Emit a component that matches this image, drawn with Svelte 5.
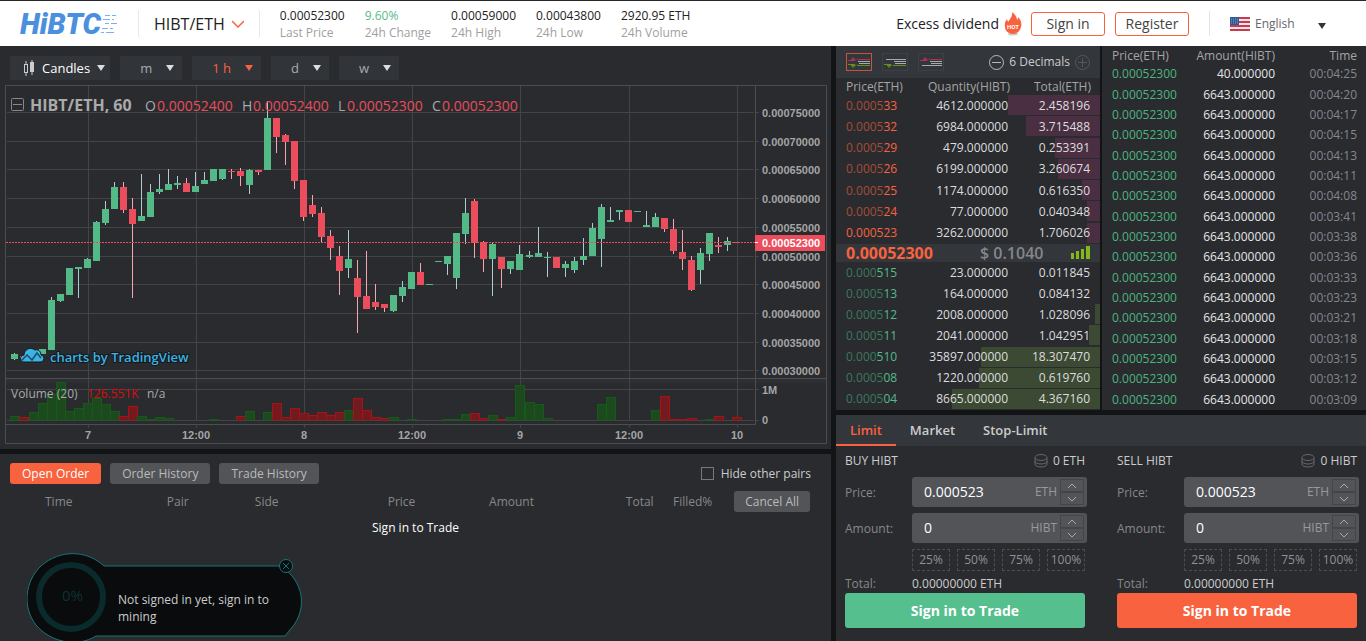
<script lang="ts">
	type Candle = {
		up: boolean;
		open: number;
		close: number;
		high: number;
		low: number;
		volume: number;
	};

	const stats = [
		{ value: '0.00052300', label: 'Last Price' },
		{ value: '9.60%', label: '24h Change', up: true },
		{ value: '0.00059000', label: '24h High' },
		{ value: '0.00043800', label: '24h Low' },
		{ value: '2920.95 ETH', label: '24h Volume' }
	];

	const intervals = ['m', '1 h', 'd', 'w'];

	// depth is the share of the row that the bar fills, in percent
	const asks = [
		{ dim: '0.0005', price: '33', quantity: '4612.000000', total: '2.458196', depth: 35 },
		{ dim: '0.0005', price: '32', quantity: '6984.000000', total: '3.715488', depth: 28 },
		{ dim: '0.0005', price: '29', quantity: '479.000000', total: '0.253391', depth: 17 },
		{ dim: '0.0005', price: '26', quantity: '6199.000000', total: '3.260674', depth: 16 },
		{ dim: '0.0005', price: '25', quantity: '1174.000000', total: '0.616350', depth: 7 },
		{ dim: '0.0005', price: '24', quantity: '77.000000', total: '0.040348', depth: 5 },
		{ dim: '', price: '0.000523', quantity: '3262.000000', total: '1.706026', depth: 5 }
	];

	const bids = [
		{ dim: '0.000', price: '515', quantity: '23.000000', total: '0.011845', depth: 0 },
		{ dim: '0.0005', price: '13', quantity: '164.000000', total: '0.084132', depth: 0 },
		{ dim: '0.0005', price: '12', quantity: '2008.000000', total: '1.028096', depth: 2 },
		{ dim: '0.0005', price: '11', quantity: '2041.000000', total: '1.042951', depth: 4 },
		{ dim: '0.000', price: '510', quantity: '35897.000000', total: '18.307470', depth: 45 },
		{ dim: '0.0005', price: '08', quantity: '1220.000000', total: '0.619760', depth: 46 },
		{ dim: '0.0005', price: '04', quantity: '8665.000000', total: '4.367160', depth: 56 }
	];

	const tradeTimes = [
		'00:04:25', '00:04:20', '00:04:17', '00:04:15', '00:04:13', '00:04:11',
		'00:04:08', '00:03:41', '00:03:38', '00:03:36', '00:03:33', '00:03:23',
		'00:03:21', '00:03:18', '00:03:15', '00:03:12', '00:03:09'
	];

	const sides = [
		{ id: 'buy', title: 'BUY HIBT', balance: '0 ETH' },
		{ id: 'sell', title: 'SELL HIBT', balance: '0 HIBT' }
	];

	const percents = ['25%', '50%', '75%', '100%'];

	const priceTicks = [
		['0.00075000', 112], ['0.00070000', 141], ['0.00065000', 169], ['0.00060000', 198],
		['0.00055000', 227], ['0.00050000', 256], ['0.00045000', 284], ['0.00040000', 313],
		['0.00035000', 342], ['0.00030000', 370]
	] as [string, number][];

	const timeTicks = [
		['7', 88], ['12:00', 196], ['8', 304], ['12:00', 412], ['9', 520], ['12:00', 629], ['10', 737]
	] as [string, number][];

	// direction, body top, body bottom, wick top, wick bottom, volume top
	const raw = `
		g 354 359 353 360 416|r 356 358 355 359 417|g 355 357 354 358 412|g 349 354 349 354 403
		g 300 350 297 350 394|g 294 301 294 302 382|g 268 295 268 295 411|g 267 269 267 298 408
		g 259 268 258 268 403|g 222 261 221 261 398|g 209 223 201 225 404|g 187 209 182 209 411
		r 187 210 182 213 416|r 209 224 198 298 406|g 216 221 174 221 416|g 192 217 184 217 419
		g 189 192 174 194 417|g 184 190 169 190 418|g 183 185 176 189 420|r 183 192 178 192 420
		g 186 192 172 192 421|g 180 184 172 184 421|g 169 181 169 181 419|g 169 179 169 180 420
		r 171 172 169 179 420|r 171 176 168 186 416|g 170 185 169 194 411|r 170 172 170 175 420
		g 118 170 101 170 412|r 118 137 118 153 403|r 135 142 134 165 417|r 141 181 141 189 408
		r 180 217 180 221 413|r 205 214 195 217 415|r 213 237 207 242 412|r 236 248 230 260 415
		r 256 271 246 295 412|g 259 268 230 278 410|r 278 297 260 333 398|r 296 309 251 309 410
		r 302 307 284 310 417|r 304 308 304 312 418|g 295 311 295 312 417|g 287 296 281 302 420
		g 272 289 272 289 419|r 272 285 263 285 420|g 284 285 284 285 421|g 261 262 261 262 421
		g 256 264 256 275 419|g 233 278 233 289 419|g 213 234 198 244 414|r 201 243 199 258 413
		r 242 259 241 272 418|g 244 259 243 296 415|r 257 269 257 288 419|g 261 269 261 274 417
		g 254 270 245 270 385|g 255 257 251 258 402|g 253 257 227 257 404|g 257 258 252 277 418
		r 257 268 257 268 421|g 264 268 261 277 420|g 261 270 257 273 420|g 256 260 238 265 420
		g 228 256 223 256 420|g 207 239 204 267 404|g 220 222 207 222 397|g 210 212 210 220 420
		r 210 222 210 222 421|g 211 212 211 212 421|g 225 227 211 227 421|g 217 227 213 227 410
		r 218 229 218 232 396|r 229 251 219 254 419|r 252 259 230 270 419|r 260 290 256 291 418
		g 253 270 248 284 420|g 233 254 233 261 419|r 245 247 237 253 416|g 241 245 237 251 420
		r 242 243 242 243 417`;

	const candles: Candle[] = raw
		.trim()
		.split(/\s*[|\n]\s*/)
		.map((row) => {
			const [dir, ...n] = row.split(' ');
			const [open, close, high, low, volume] = n.map(Number);
			return { up: dir === 'g', open, close, high, low, volume };
		});

	const candleX = (i: number) => Math.floor(11.98 + i * 9.018);

	let activeInterval = $state('1 h');
	let showMining = $state(true);
</script>

{#snippet caret()}
	<svg class="caret" viewBox="0 0 8 6" aria-hidden="true"><path d="M0 0h8L4 6z" /></svg>
{/snippet}

{#snippet bookRows(rows: typeof asks, kind: string)}
	<table class="book-table {kind}">
		<tbody>
			{#each rows as row}
				<tr style="--depth: {row.depth}%">
					<td class="price"><span class="dim">{row.dim}</span>{row.price}</td>
					<td class="quantity">{row.quantity}</td>
					<td class="total">{row.total}</td>
				</tr>
			{/each}
		</tbody>
	</table>
{/snippet}

{#snippet depthIcon(red: boolean, green: boolean)}
	<svg viewBox="0 0 24 16" aria-hidden="true">
		{#if red}
			<path d="M10 5.500h13" stroke="#b02f55" />
			<path d="M1 6.500h3l2-3 3 3" stroke="#b02f55" fill="none" />
			<path d="M4 5h4v2H4z" fill="#b02f55" />
		{:else}
			<path d="M3 5.500h20" stroke="#aaa" />
		{/if}
		<path d="M11 7.500h12M12 9.500h11" stroke="#aaa" />
		{#if green}
			<path d="M10 11.500h13" stroke="#64911d" />
			<path d="M1 10.500h3l2 3 3-3" stroke="#64911d" fill="none" />
			<path d="M4 10h4v2H4z" fill="#64911d" />
		{:else}
			<path d="M3 11.500h20" stroke="#aaa" />
		{/if}
	</svg>
{/snippet}

<div class="page">
	<header class="topbar">
		<a class="logo" href="#home">
			<span>HiBTC</span>
			<svg viewBox="0 0 17 20" aria-hidden="true">
				<path d="M4 1.500h5M11 1.500h4M2 5.500h7M11 5.500h2M4 9.500h4M10 9.500h6M1 14.500h6M9 14.500h3M0 18.500h3M5 18.500h8" />
			</svg>
		</a>
		<button class="pair" type="button">
			HIBT/ETH
			<svg viewBox="0 0 12 8" aria-hidden="true"><path d="M0 1l6 6 6-6" /></svg>
		</button>
		<dl class="stats">
			{#each stats as stat}
				<div>
					<dd class:up={stat.up}>{stat.value}</dd>
					<dt>{stat.label}</dt>
				</div>
			{/each}
		</dl>
		<nav class="account">
			<a class="dividend" href="#dividend">Excess dividend</a>
			<svg class="hot" viewBox="0 0 18 24" role="img" aria-label="Hot">
				<ellipse cx="9" cy="22" rx="5" ry="1.500" fill="#ccc" />
				<path
					d="M8 0c3 2 5 5 5 8 1-1 1-2 1-3 3 3 4 6 3 10-1 4-4 7-8 7s-8-3-8-7c-1-4 1-6 2-8 0 1 1 2 1 3C6 7 9 4 8 0z"
					fill="#f9623e"
				/>
				<text x="9" y="17">HOT</text>
			</svg>
			<a class="outline" href="#signin">Sign in</a>
			<a class="outline" href="#register">Register</a>
			<div class="language">
				<svg class="flag" viewBox="0 0 20 14" aria-hidden="true">
					<rect width="20" height="14" fill="#f4e4e6" />
					<path d="M0 1h20M0 5h20M0 9h20M0 13h20" stroke="#c83a4e" stroke-width="2" />
					<rect width="9" height="8" fill="#2b5a94" />
					<path d="M1 2h7M1 4h7M1 6h7" stroke="#7f9fc4" stroke-dasharray="1 1" />
				</svg>
				<select aria-label="Language">
					<option>English</option>
				</select>
				{@render caret()}
			</div>
		</nav>
	</header>

	<main>
		<div class="left">
			<section class="panel chart">
				<div class="chart-tools">
					<button class="candles-button" type="button">
						<svg class="candle-icon" viewBox="0 0 12 16" aria-hidden="true">
							<path d="M3 1v3M3 12v4" stroke="#ccc" />
							<rect x="1.500" y="4.500" width="3" height="8" fill="none" stroke="#ccc" />
							<path d="M9 0v15" stroke="#ccc" />
							<rect x="7" y="2" width="4" height="10" fill="#ccc" />
						</svg>
						Candles
						{@render caret()}
					</button>
					{#each intervals as interval}
						<button
							type="button"
							class="interval"
							class:active={activeInterval === interval}
							onclick={() => (activeInterval = interval)}
						>
							{interval}
							{@render caret()}
						</button>
					{/each}
				</div>

				<svg class="plot" viewBox="5 85 822 359" role="img" aria-label="HIBT/ETH price chart">
					<rect class="shade" x="6" y="379" width="820" height="4" />
					<g class="grid">
						{#each timeTicks as [, x]}
							<path d="M{x + 0.5} 86V421M{x + 0.5} 425v3" />
						{/each}
						{#each priceTicks as [, y]}
							<path d="M7 {y + 0.5}H754M756 {y + 0.5}h3" />
						{/each}
						<path d="M7 389.500H754M756 389.500h3M7 420.500H754M756 420.500h3" />
					</g>
					<path class="frame" d="M5.500 85.500H826.500V443.500H5.500zM6 378.500H826M755.500 86V424.500H6" />

					{#each candles as c, i}
						<rect
							class="volume {c.up ? 'up' : 'down'}"
							x={candleX(i) - 0.5}
							y={Math.min(c.volume, 420) + 0.5}
							width="9"
							height={Math.max(420 - c.volume, 0)}
						/>
						<rect
							class="wick {c.up ? 'up' : 'down'}"
							x={candleX(i) + 3}
							y={c.high}
							width="1"
							height={c.low - c.high}
						/>
						<rect
							class="body {c.up ? 'up' : 'down'}"
							x={candleX(i)}
							y={c.open}
							width="7"
							height={c.close - c.open}
						/>
					{/each}
					<path class="base" d="M12 420.500H742" />

					<path class="last" d="M6 242.500H755" />
					<g class="axis">
						{#each priceTicks as [label, y]}
							<text x="762" y={y + 5}>{label}</text>
						{/each}
						<text x="762" y="394">1M</text>
						<text x="762" y="424">0</text>
						{#each timeTicks as [label, x]}
							<text class="time" {x} y="439">{label}</text>
						{/each}
					</g>
					<rect x="755" y="235" width="70" height="16" fill="#ec4d5c" />
					<path d="M755 242.500h3" stroke="#fff" />
					<text class="last-label" x="762" y="247">0.00052300</text>

					<g class="legend">
						<rect x="11.500" y="98.500" width="12" height="12" rx="1" />
						<path d="M13 104.500h9" />
						<text class="legend-title" x="30" y="111">HIBT/ETH, 60</text>
						<text x="145" y="111">O<tspan x="157">0.00052400</tspan></text>
						<text x="242" y="111">H<tspan x="253">0.00052400</tspan></text>
						<text x="338" y="111">L<tspan x="347">0.00052300</tspan></text>
						<text x="432" y="111">C<tspan x="442">0.00052300</tspan></text>
					</g>
					<g class="volume-legend">
						<text x="11" y="398">Volume (20)</text>
						<text class="red" x="87" y="398">126.551K</text>
						<text x="147" y="398">n/a</text>
					</g>

					<g class="credit">
						<path
							class="cloud"
							d="M24 362c-5 0-5-6 0-7 0-5 6-9 11-5 4-1 6 2 6 5 4 1 4 7-1 7z"
						/>
						<path class="cloud-line" d="M21 361l6-6 5 5 5-7 4 5" />
						<text x="50" y="362">charts by TradingView</text>
					</g>
				</svg>
			</section>

			<section class="panel orders">
				<div class="order-tabs">
					<button class="active" type="button">Open Order</button>
					<button type="button">Order History</button>
					<button type="button">Trade History</button>
					<label><input type="checkbox" /> Hide other pairs</label>
				</div>
				<table class="order-table">
					<thead>
						<tr>
							<th class="c-time">Time</th>
							<th class="c-pair">Pair</th>
							<th class="c-side">Side</th>
							<th class="c-price">Price</th>
							<th class="c-amount">Amount</th>
							<th class="c-total">Total</th>
							<th class="c-filled">Filled%</th>
							<th><button type="button">Cancel All</button></th>
						</tr>
					</thead>
				</table>
				<p class="empty"><a href="#signin">Sign in to Trade</a></p>

				{#if showMining}
					<aside class="mining">
						<svg viewBox="0 0 278 88" aria-hidden="true">
							<path
								class="shell"
								d="M77 13H253C271 23 283 48 267 72L258 83H69C50 95 23 89 9 72C-5 54-2 28 14 13C33-4 60-3 77 13z"
							/>
							<circle cx="44" cy="44" r="32" />
							<text x="35" y="48">0%</text>
						</svg>
						<p>Not signed in yet, sign in to mining</p>
						<button type="button" aria-label="Close" onclick={() => (showMining = false)}>
							<svg viewBox="0 0 14 14" aria-hidden="true">
								<circle cx="7" cy="7" r="6.500" />
								<path d="M4 4l6 6M10 4l-6 6" />
							</svg>
						</button>
					</aside>
				{/if}
			</section>
		</div>

		<div class="right">
			<div class="market">
				<section class="panel book">
					<div class="book-tools">
						<button class="depth active" type="button" aria-label="Both sides">
							{@render depthIcon(true, true)}
						</button>
						<button class="depth" type="button" aria-label="Bids">
							{@render depthIcon(false, true)}
						</button>
						<button class="depth" type="button" aria-label="Asks">
							{@render depthIcon(true, false)}
						</button>
						<div class="decimals">
							<button type="button" aria-label="Fewer decimals">
								<svg viewBox="0 0 15 15"><circle cx="7.500" cy="7.500" r="7" /><path d="M3 7.500h9" /></svg>
							</button>
							6 Decimals
							<button type="button" aria-label="More decimals" disabled>
								<svg viewBox="0 0 15 15"><circle cx="7.500" cy="7.500" r="7" /><path d="M3 7.500h9M7.500 3v9" /></svg>
							</button>
						</div>
					</div>
					<div class="book-head">
						<span>Price(ETH)</span>
						<span>Quantity(HIBT)</span>
						<span>Total(ETH)</span>
					</div>
					{@render bookRows(asks, 'asks')}
					<div class="book-last">
						<strong>0.00052300</strong>
						<span>$ 0.1040</span>
						<svg viewBox="0 0 19 14" aria-hidden="true">
							<path d="M0 7h3v6H0zM5 5h3v8H5zM10 3h3v10h-3zM15 0h4v13h-4z" />
						</svg>
					</div>
					{@render bookRows(bids, 'bids')}
				</section>

				<section class="panel trades">
					<table>
						<thead>
							<tr>
								<th>Price(ETH)</th>
								<th>Amount(HIBT)</th>
								<th>Time</th>
							</tr>
						</thead>
						<tbody>
							{#each tradeTimes as time, i}
								<tr>
									<td class="price">0.00052300</td>
									<td class="amount">{i === 0 ? '40.000000' : '6643.000000'}</td>
									<td class="time">{time}</td>
								</tr>
							{/each}
						</tbody>
					</table>
				</section>
			</div>

			<section class="panel trade">
				<div class="trade-tabs">
					<button class="active" type="button">Limit</button>
					<button type="button">Market</button>
					<button type="button">Stop-Limit</button>
				</div>
				<div class="forms">
					{#each sides as side}
						<form class={side.id}>
							<div class="balance">
								<span>{side.title}</span>
								<svg viewBox="0 0 14 14" aria-hidden="true">
									<ellipse cx="7" cy="3.500" rx="6" ry="3" />
									<path d="M1 4v3c0 4 12 4 12 0V4M1 7v3c0 4 12 4 12 0V7" />
								</svg>
								<span>{side.balance}</span>
							</div>
							{#each [['Price', '0.000523', 'ETH'], ['Amount', '0', 'HIBT']] as [label, value, unit]}
								<div class="field">
									<label for="{side.id}-{label}">{label}:</label>
									<div class="box">
										<input id="{side.id}-{label}" type="text" {value} />
										<span>{unit}</span>
										<div class="stepper">
											<button type="button" aria-label="Increase">
												<svg viewBox="0 0 10 6"><path d="M1 5l4-4 4 4" /></svg>
											</button>
											<button type="button" aria-label="Decrease">
												<svg viewBox="0 0 10 6"><path d="M1 1l4 4 4-4" /></svg>
											</button>
										</div>
									</div>
								</div>
							{/each}
							<div class="percents">
								{#each percents as percent}
									<button type="button">{percent}</button>
								{/each}
							</div>
							<div class="sum"><span>Total:</span><output>0.00000000 ETH</output></div>
							<button class="submit" type="submit">Sign in to Trade</button>
						</form>
					{/each}
				</div>
			</section>
		</div>
	</main>
</div>

<style>
	:global(body) {
		background: #131416;
	}

	.page {
		font-family: 'Open Sans', sans-serif;
		font-size: 12px;
		line-height: 16px;
		color: #ccc;
	}

	.page * {
		box-sizing: border-box;
	}

	button,
	input,
	select {
		font: inherit;
		color: inherit;
		background: none;
		border: 0;
		padding: 0;
		margin: 0;
	}

	a {
		color: inherit;
		text-decoration: none;
	}

	svg {
		display: block;
		flex: none;
	}

	table {
		width: 100%;
		border-collapse: collapse;
		table-layout: fixed;
	}

	th,
	td {
		padding: 0;
		font-weight: 400;
		text-align: left;
	}

	.caret {
		width: 8px;
		height: 6px;
		fill: currentColor;
	}

	/* top bar */
	.topbar {
		display: flex;
		align-items: center;
		height: 46px;
		padding-left: 20px;
		border-top: 1px solid #26282c;
		background: #fff;
		color: #222;
	}

	.logo {
		display: flex;
		align-items: center;
		width: 118px;
		color: #4b8fdf;
		font: italic 900 29px/32px Roboto, sans-serif;
	}

	.logo svg {
		width: 17px;
		height: 20px;
		stroke: #7db0ea;
	}

	.pair {
		display: flex;
		align-items: center;
		gap: 7px;
		height: 29px;
		padding: 0 15px;
		border: solid #e8e8e8;
		border-width: 0 1px;
		border-radius: 3px;
		font-size: 16px;
	}

	.pair svg {
		width: 12px;
		height: 8px;
		fill: none;
		stroke: #f9623e;
		stroke-width: 1.5;
	}

	.stats {
		display: flex;
		gap: 20px;
		margin: 0 0 0 20px;
	}

	.stats dd {
		margin: 0;
		line-height: 17px;
	}

	.stats dt {
		color: #a0a0a0;
		line-height: 17px;
	}

	.stats .up {
		color: #55bb8a;
	}

	.account {
		display: flex;
		align-items: center;
		margin-left: auto;
		padding-right: 40px;
		font-size: 14px;
	}

	.hot {
		width: 18px;
		height: 24px;
		margin: 0 9px 0 5px;
	}

	.hot text {
		font: 700 6px Roboto, sans-serif;
		fill: #fff;
		text-anchor: middle;
	}

	.outline {
		width: 74px;
		margin-right: 10px;
		border: 1px solid #f9623e;
		border-radius: 3px;
		line-height: 22px;
		text-align: center;
		color: #444;
	}

	.language {
		display: flex;
		align-items: center;
		gap: 5px;
		height: 25px;
		margin-left: 10px;
		padding-left: 20px;
		border-left: 1px solid #e4e4e4;
		font-size: 12px;
		color: #666;
	}

	.flag {
		width: 20px;
		height: 14px;
	}

	.language select {
		width: 58px;
		appearance: none;
	}

	.language .caret {
		margin-top: 4px;
		fill: #333;
	}

	/* main grid */
	main {
		display: grid;
		grid-template-columns: minmax(0, 1fr) 530px;
		gap: 5px;
	}

	.left,
	.right {
		display: flex;
		flex-direction: column;
		gap: 5px;
		min-width: 0;
	}

	.panel {
		background: #292b2f;
	}

	/* chart */
	.chart-tools {
		display: flex;
		gap: 10px;
		padding: 10px 10px 5px;
	}

	.chart-tools button {
		display: flex;
		align-items: center;
		height: 24px;
		padding: 0 8px 0 20px;
		background: #313439;
		font-size: 13px;
		color: #aaa;
	}

	.chart-tools .candles-button {
		gap: 7px;
		padding: 0 5px 0 13px;
		color: #fff;
	}

	.chart-tools .interval {
		gap: 14px;
	}

	.chart-tools .active {
		color: #f9623e;
	}

	.chart-tools button:not(.active) .caret {
		fill: #ddd;
	}

	.candle-icon {
		width: 12px;
		height: 16px;
	}

	.plot {
		width: calc(100% - 9px);
		margin-left: 5px;
		padding-bottom: 5px;
		box-sizing: content-box;
	}

	.shade {
		fill: #2d2f33;
	}

	.grid path {
		stroke: #444;
	}

	.frame {
		fill: none;
		stroke: #4c4d50;
	}

	.volume.up {
		fill: #1c491e;
		stroke: #135c17;
	}

	.volume.down {
		fill: #731a1f;
		stroke: #a61217;
	}

	.base {
		stroke: #444;
		stroke-opacity: 0.5;
	}

	.wick.up {
		fill: #a9cdd3;
	}

	.wick.down {
		fill: #f5a6ae;
	}

	.body.up {
		fill: #53b987;
	}

	.body.down {
		fill: #eb4d5c;
	}

	.last {
		stroke: #eb4d5c;
		stroke-dasharray: 2 1;
	}

	.axis text,
	.last-label {
		font: 700 11px 'Liberation Sans', Arial, sans-serif;
		fill: #a5a5a5;
	}

	.axis .time {
		text-anchor: middle;
	}

	.last-label {
		fill: #fff;
	}

	.legend rect,
	.legend path {
		fill: none;
		stroke: #888;
	}

	.legend text {
		font-size: 14px;
		fill: #aaa;
	}

	.legend tspan {
		fill: #eb4d5c;
	}

	.legend .legend-title {
		font-size: 16px;
		font-weight: 700;
	}

	.volume-legend text {
		font-size: 12px;
		fill: #aaa;
	}

	.volume-legend .red {
		fill: #d90b0b;
	}

	.cloud {
		fill: #3bb3e4;
		stroke: #151719;
	}

	.cloud-line {
		fill: none;
		stroke: #1c4d63;
		stroke-width: 1.5;
	}

	.credit text {
		font-size: 13px;
		font-weight: 600;
		fill: #3bb3e4;
		stroke: #151719;
		stroke-width: 2px;
		paint-order: stroke;
	}

	/* orders */
	.orders {
		position: relative;
		flex: 1;
		overflow: hidden;
		min-height: 187px;
	}

	.order-tabs {
		display: flex;
		align-items: center;
		gap: 9px;
		padding: 9px 20px 0 10px;
	}

	.order-tabs button,
	.order-table button {
		padding: 0 12px;
		border-radius: 3px;
		line-height: 21px;
		background: #525458;
		color: #bbb;
	}

	.order-tabs .active {
		background: #f9623e;
		color: #fff;
	}

	.order-tabs label {
		display: flex;
		align-items: center;
		gap: 7px;
		margin-left: auto;
	}

	.order-tabs input {
		width: 13px;
		height: 13px;
		border: 1px solid #77797c;
		appearance: none;
	}

	.order-table {
		margin-left: 45px;
		width: calc(100% - 45px);
		margin-top: 7px;
		color: #888;
	}

	.order-table button {
		padding: 0 11px;
	}

	.c-time {
		width: 15.5%;
	}

	.c-pair {
		width: 11.2%;
	}

	.c-side {
		width: 16.9%;
	}

	.c-price {
		width: 12.9%;
	}

	.c-amount {
		width: 17.4%;
	}

	.c-total {
		width: 6%;
	}

	.c-filled {
		width: 7.8%;
	}

	.empty {
		margin: 8px 0 0;
		text-align: center;
		color: #fff;
	}

	.mining {
		position: absolute;
		left: 27px;
		top: 99px;
		width: 278px;
	}

	.shell {
		fill: #090b0d;
		stroke: #14777b;
	}

	.mining > svg circle {
		fill: none;
		stroke: #0b2a2b;
		stroke-width: 6;
	}

	.mining text {
		font-size: 15px;
		fill: #0c3234;
	}

	.mining p {
		position: absolute;
		left: 91px;
		top: 38px;
		width: 160px;
		margin: 0;
		line-height: 17px;
	}

	.mining button {
		position: absolute;
		left: 252px;
		top: 6px;
	}

	.mining button svg {
		width: 14px;
		height: 14px;
		fill: #090b0d;
		stroke: #14777b;
	}

	/* order book */
	.market {
		display: grid;
		grid-template-columns: 264px 264px;
		gap: 2px;
	}

	.book-tools {
		display: flex;
		align-items: center;
		gap: 10px;
		height: 32px;
		padding: 0 10px;
		background: #33363b;
	}

	.depth {
		border: 1px solid #3d4044;
	}

	.depth svg {
		width: 24px;
		height: 16px;
	}

	.depth.active {
		border-color: #c4553b;
	}

	.decimals {
		display: flex;
		align-items: center;
		gap: 5px;
		margin-left: auto;
	}

	.decimals svg {
		width: 15px;
		height: 15px;
		fill: none;
		stroke: #bbb;
	}

	.decimals button:disabled svg {
		stroke: #55575b;
	}

	.book-head {
		display: grid;
		grid-template-columns: 70px 94px 1fr;
		padding: 0 9px 0 10px;
		line-height: 17px;
		color: #a5a5a5;
	}

	.book-head span + span {
		text-align: right;
	}

	.book-table {
		height: 149px;
	}

	.book-table tr {
		background: linear-gradient(to left, var(--bar) var(--depth), transparent 0) no-repeat;
		background-size: 100% calc(100% - 1px);
	}

	.asks {
		--bar: #4a2f43;
	}

	.bids {
		--bar: #3c4a34;
		height: 148px;
	}

	.book .price {
		width: 80px;
		padding-left: 10px;
	}

	.book .quantity {
		width: 92px;
		text-align: right;
		color: #ddd;
	}

	.book .total {
		padding-right: 10px;
		text-align: right;
		color: #ddd;
	}

	.asks .price {
		color: #f9623e;
	}

	.bids .price {
		color: #55bb8a;
	}

	.asks .dim {
		color: #a84b37;
	}

	.bids .dim {
		color: #3a7a5c;
	}

	.book-last {
		display: flex;
		align-items: center;
		height: 18px;
		padding: 0 10px;
		background: #33363b;
		font-size: 16px;
		font-weight: 600;
		color: #85878a;
	}

	.book-last strong {
		width: 134px;
		font-weight: 700;
		color: #f9623e;
	}

	.book-last svg {
		width: 19px;
		height: 14px;
		margin-left: auto;
		fill: #84b81a;
	}

	/* latest trades */
	.trades {
		padding: 2px 9px 0 10px;
	}

	.trades table {
		height: 362px;
	}

	.trades th {
		height: 16px;
		color: #a5a5a5;
	}

	.trades th:nth-child(1) {
		width: 75px;
	}

	.trades th:nth-child(2) {
		width: 88px;
		text-align: right;
	}

	.trades th:nth-child(3),
	.trades .amount,
	.trades .time {
		text-align: right;
	}

	.trades .price {
		color: #4cb57f;
	}

	.trades .amount {
		color: #e4e4e4;
	}

	.trades .time {
		color: #85878f;
	}

	/* trade form */
	.trade {
		flex: 1;
	}

	.trade-tabs {
		display: flex;
		height: 31px;
		background: #33363b;
		font-size: 13px;
		font-weight: 600;
	}

	.trade-tabs button {
		padding: 0 14px;
		border-bottom: 2px solid transparent;
	}

	.trade-tabs .active {
		border-color: #f9623e;
		color: #f9623e;
	}

	.forms {
		display: grid;
		grid-template-columns: repeat(2, minmax(0, 1fr));
		gap: 30px;
		padding: 7px 7px 13px 9px;
	}

	.balance {
		display: flex;
		gap: 5px;
		padding-right: 2px;
		margin-bottom: 8px;
	}

	.balance svg {
		width: 14px;
		height: 14px;
		margin: 1px 0 0 auto;
		fill: none;
		stroke: #66686c;
	}

	.field {
		display: flex;
		align-items: center;
		margin-bottom: 6px;
		color: #999;
	}

	.field label,
	.sum span {
		flex: none;
		width: 67px;
		color: #888;
	}

	.field label {
		padding-top: 2px;
	}

	.box {
		flex: 1;
		min-width: 0;
		display: flex;
		align-items: center;
		height: 30px;
		padding: 0 3px 0 12px;
		border-radius: 3px;
		background: #525458;
	}

	.box input {
		flex: 1;
		min-width: 0;
		font-size: 14px;
		color: #fff;
	}

	.stepper {
		display: grid;
		width: 24px;
		margin-left: 3px;
	}

	.stepper button {
		display: grid;
		place-items: center;
		height: 13px;
		border: 1px solid #434549;
	}

	.stepper svg {
		width: 10px;
		height: 6px;
		fill: none;
		stroke: #aaa;
	}

	.percents {
		display: grid;
		grid-template-columns: repeat(4, 1fr);
		gap: 7px;
		padding: 0 2px 0 67px;
	}

	.percents button {
		height: 22px;
		border: 1px dashed #4b4d50;
		color: #909296;
	}

	.sum {
		display: flex;
		margin: 5px 0 1px;
	}

	.submit {
		display: block;
		width: calc(100% - 2px);
		height: 35px;
		border-radius: 3px;
		background: #55bf8d;
		font-size: 14px;
		font-weight: 700;
		color: #fff;
	}

	.sell .submit {
		background: #f9623e;
	}
</style>
